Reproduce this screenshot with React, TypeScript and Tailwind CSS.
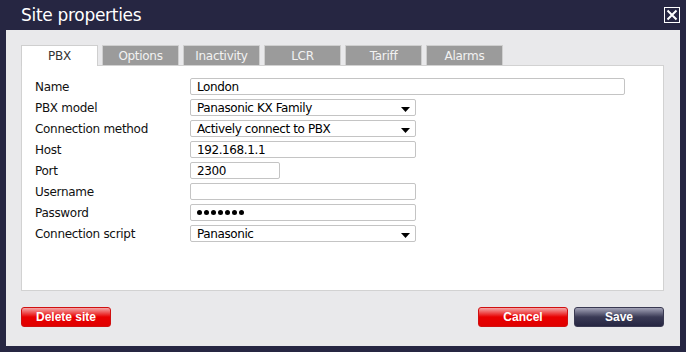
import React from "react";

const font = { fontFamily: '"DejaVu Sans", Verdana, sans-serif' };
const btnFont = { fontFamily: '"Liberation Sans", Arial, sans-serif' };

function Caret() {
  return (
    <svg width="9" height="5" viewBox="0 0 9 5" className="absolute right-[5px] top-[7px]">
      <polygon points="0,0 9,0 4.5,5" fill="#000" />
    </svg>
  );
}

function Field({ w, value, select, dots }: { w: string; value?: string; select?: boolean; dots?: boolean }) {
  return (
    <div className={`relative h-[17px] ${w} border border-[#c4c4c4] bg-white rounded-[2px] pl-[6px] flex items-center text-[12px] tracking-[-0.4px] text-black leading-none`}>
      {dots ? (
        <span className="flex gap-[2px]">
          {Array.from({ length: 7 }).map((_, i) => (
            <span key={i} className="w-[5px] h-[5px] rounded-full bg-black" />
          ))}
        </span>
      ) : (
        value
      )}
      {select && <Caret />}
    </div>
  );
}

export default function App() {
  const tabs = ["PBX", "Options", "Inactivity", "LCR", "Tariff", "Alarms"];
  const rows: { label: string; field: React.ReactNode }[] = [
    { label: "Name", field: <Field w="w-[435px]" value="London" /> },
    { label: "PBX model", field: <Field w="w-[226px]" value="Panasonic KX Family" select /> },
    { label: "Connection method", field: <Field w="w-[226px]" value="Actively connect to PBX" select /> },
    { label: "Host", field: <Field w="w-[226px]" value="192.168.1.1" /> },
    { label: "Port", field: <Field w="w-[90px]" value="2300" /> },
    { label: "Username", field: <Field w="w-[226px]" value="" /> },
    { label: "Password", field: <Field w="w-[226px]" dots /> },
    { label: "Connection script", field: <Field w="w-[226px]" value="Panasonic" select /> },
  ];
  const red =
    "w-[90px] h-[20px] rounded-[3px] border border-[#d01010] bg-[linear-gradient(#f4a8a8_0%,#e80000_50%,#e00000_100%)] text-white text-[12px] font-bold leading-none";
  return (
    <div className="w-[686px] h-[352px] bg-[#262642] flex flex-col" style={font}>
      <div className="h-[30px] flex items-center justify-between pl-[21px] pr-[6px]">
        <span className="text-white text-[17px] tracking-[-0.3px] leading-none">Site properties</span>
        <div className="w-[16px] h-[16px] border border-white flex items-center justify-center">
          <svg width="12" height="12" viewBox="0 0 12 12">
            <path d="M1.5 1.5 L10.5 10.5 M10.5 1.5 L1.5 10.5" stroke="#fff" strokeWidth="2" />
          </svg>
        </div>
      </div>
      <div className="mx-[6px] h-[316px] bg-[#e9e9eb] flex flex-col pl-[15px] pr-[16px] pt-[15px]">
        <div className="flex gap-[4px] h-[20px] relative z-10">
          {tabs.map((t, i) => (
            <div
              key={t}
              className={`w-[77px] ${i === 0 ? "h-[21px] bg-white text-[#333]" : "h-[20px] bg-[#9b9b9b] text-[#f2f2f2]"} border border-b-0 border-[#cfcfcf] flex items-center justify-center text-[12px] tracking-[-0.3px]`}
            >
              {t}
            </div>
          ))}
        </div>
        <div className="h-[226px] bg-white border border-[#d2d2d2] pl-[13px] pt-[12px] flex flex-col gap-[4px]">
          {rows.map((r) => (
            <div key={r.label} className="flex items-center h-[17px]">
              <div className="w-[155px] text-[12px] tracking-[-0.3px] text-[#111]">{r.label}</div>
              {r.field}
            </div>
          ))}
        </div>
        <div className="flex justify-between mt-[16px]" style={btnFont}>
          <button className={red}>Delete site</button>
          <div className="flex gap-[6px]">
            <button className={red}>Cancel</button>
            <button className="w-[90px] h-[20px] rounded-[3px] border border-[#3a3a52] bg-[linear-gradient(#a4a4b8_0%,#3a3a55_50%,#262642_100%)] text-white text-[12px] font-bold leading-none">
              Save
            </button>
          </div>
        </div>
      </div>
    </div>
  );
}
